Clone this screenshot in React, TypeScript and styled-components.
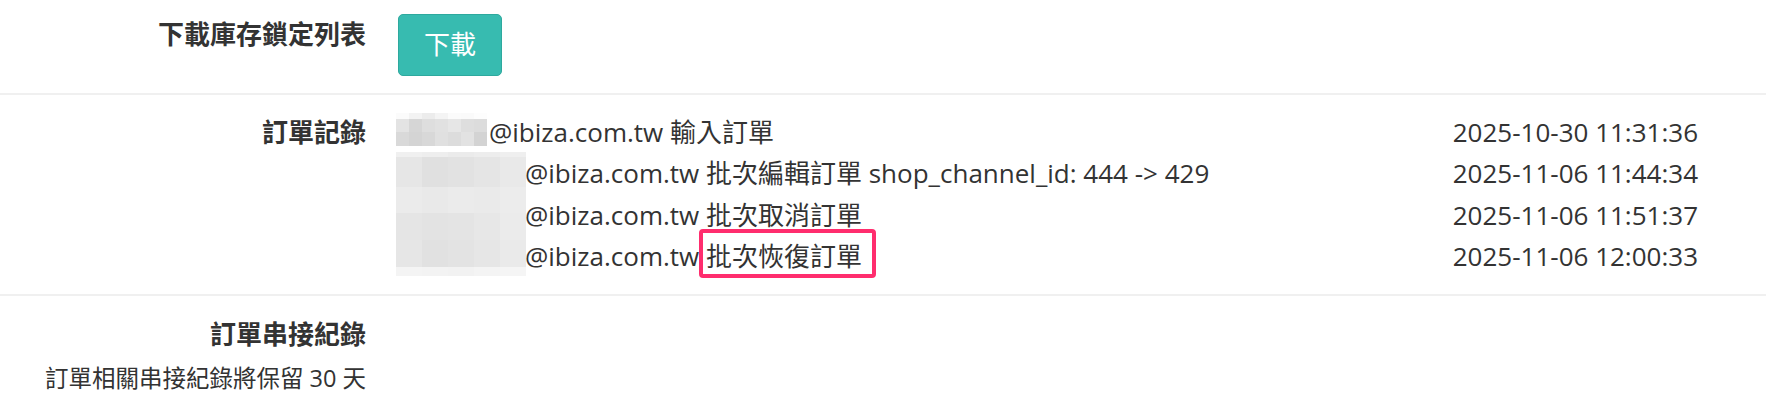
import React from "react"
import styled, { createGlobalStyle } from "styled-components"

//#region Css
const GlobalStyle = createGlobalStyle`
    body {
        margin: 0;
        background: #fff;
        font-family: "Open Sans", "Noto Sans CJK TC", sans-serif;
        font-size: 26px;
        line-height: 41.6px;
        color: #333;
    }
`

const Section = styled.div`
    display: grid;
    grid-template-columns: 366px 1fr;
    column-gap: 30px;
    padding: ${(p: { pad: string }) => p.pad};
    padding-right: 68px;
    border-bottom: 2px solid #f0f0f0;

    &:last-child {
        border-bottom: none;
    }
`

const LabelColumn = styled.div`
    text-align: right;
`

const Label = styled.div`
    font-weight: 700;
`

const Note = styled.div`
    white-space: nowrap;
    font-size: 23.5px;
    line-height: 44px;
`

const Button = styled.button`
    font-family: inherit;
    font-size: 26px;
    line-height: 41.6px;
    color: #fff;
    background: #37bbb0;
    border: 1px solid #2ea99e;
    border-radius: 5px;
    padding: 9px 25px;
    margin-left: 2px;
    cursor: pointer;
`

const LogGrid = styled.div`
    display: grid;
    grid-template-columns: 129px 1fr auto;
`

const FirstEntry = styled.div`
    grid-column: 1 / 3;
    display: flex;
    align-items: flex-start;
`

const Message = styled.div`
    grid-column: 2;
    white-space: nowrap;
`

const Time = styled.div`
    grid-column: 3;
    text-align: right;
    white-space: nowrap;
`

interface MosaicProps {
    cols: number
    cellW: number
    rowSizes: string
}

const Mosaic = styled.div<MosaicProps>`
    display: grid;
    grid-template-columns: repeat(${p => p.cols}, ${p => p.cellW}px);
    grid-template-rows: ${p => p.rowSizes};
    flex-shrink: 0;
`

const SmallMosaic = styled(Mosaic)`
    margin: 1px 2px 0 0;
`

const TallMosaic = styled(Mosaic)`
    grid-column: 1;
    grid-row: 2 / 5;
    margin-top: -1px;
    margin-bottom: 2px;
`

const Cell = styled.div<{ shade: string }>`
    background: ${p => p.shade};
`

const Marked = styled.span`
    position: relative;

    &::after {
        content: "";
        position: absolute;
        top: -9px;
        bottom: -4px;
        left: -7px;
        right: -14px;
        border: 4px solid #ff2d6e;
        border-radius: 4px;
        pointer-events: none;
    }
`
//#endregion

const smallShades = [
    "#fbfbfb", "#f3f3f3", "#ececec", "#f4f4f4", "#fbfbfb", "#fafafa", "#fdfdfd",
    "#e3e3e3", "#d6d6d6", "#dedede", "#e1e1e1", "#e6e6e6", "#dedede", "#dcdcdc",
    "#d9d9d9", "#d4d4d4", "#d8d8d8", "#e0e0e0", "#dcdcdc", "#e2e2e2", "#d3d3d3",
]

const tallShades = [
    "#f0f0f0", "#eeeeee", "#ebebeb", "#ededed", "#efefef",
    "#e6e6e6", "#e0e0e0", "#e2e2e2", "#e5e5e5", "#e9e9e9",
    "#ebebeb", "#e9e9e9", "#ebebeb", "#eaeaea", "#ececec",
    "#e5e5e5", "#e3e3e3", "#e4e4e4", "#e7e7e7", "#ebebeb",
    "#e6e6e6", "#e1e1e1", "#e3e3e3", "#e6e6e6", "#eaeaea",
    "#f4f4f4", "#f3f3f3", "#f2f2f2", "#f4f4f4", "#f5f5f5",
]

const logs = [
    { text: "@ibiza.com.tw 批次編輯訂單 shop_channel_id: 444 -> 429", time: "2025-11-06 11:44:34" },
    { text: "@ibiza.com.tw 批次取消訂單", time: "2025-11-06 11:51:37" },
]

const App = () => {
    return (
        <>
            <GlobalStyle />
            <Section pad="14px 0 17px">
                <LabelColumn>
                    <Label>下載庫存鎖定列表</Label>
                </LabelColumn>
                <div>
                    <Button>下載</Button>
                </div>
            </Section>
            <Section pad="17px 0 16px">
                <LabelColumn>
                    <Label>訂單記錄</Label>
                </LabelColumn>
                <LogGrid>
                    <FirstEntry>
                        <SmallMosaic cols={7} cellW={13} rowSizes="6px 13px 14px">
                            {smallShades.map((s, i) => <Cell key={i} shade={s} />)}
                        </SmallMosaic>
                        <span>@ibiza.com.tw 輸入訂單</span>
                    </FirstEntry>
                    <Time>2025-10-30 11:31:36</Time>
                    <TallMosaic cols={5} cellW={26} rowSizes="5px 30px 26px 27px 27px 1fr">
                        {tallShades.map((s, i) => <Cell key={i} shade={s} />)}
                    </TallMosaic>
                    {logs.map(l => (
                        <React.Fragment key={l.time}>
                            <Message>{l.text}</Message>
                            <Time>{l.time}</Time>
                        </React.Fragment>
                    ))}
                    <Message>@ibiza.com.tw <Marked>批次恢復訂單</Marked></Message>
                    <Time>2025-11-06 12:00:33</Time>
                </LogGrid>
            </Section>
            <Section pad="18px 0 0">
                <LabelColumn>
                    <Label>訂單串接紀錄</Label>
                    <Note>訂單相關串接紀錄將保留 30 天</Note>
                </LabelColumn>
            </Section>
        </>
    )
}

export default App
